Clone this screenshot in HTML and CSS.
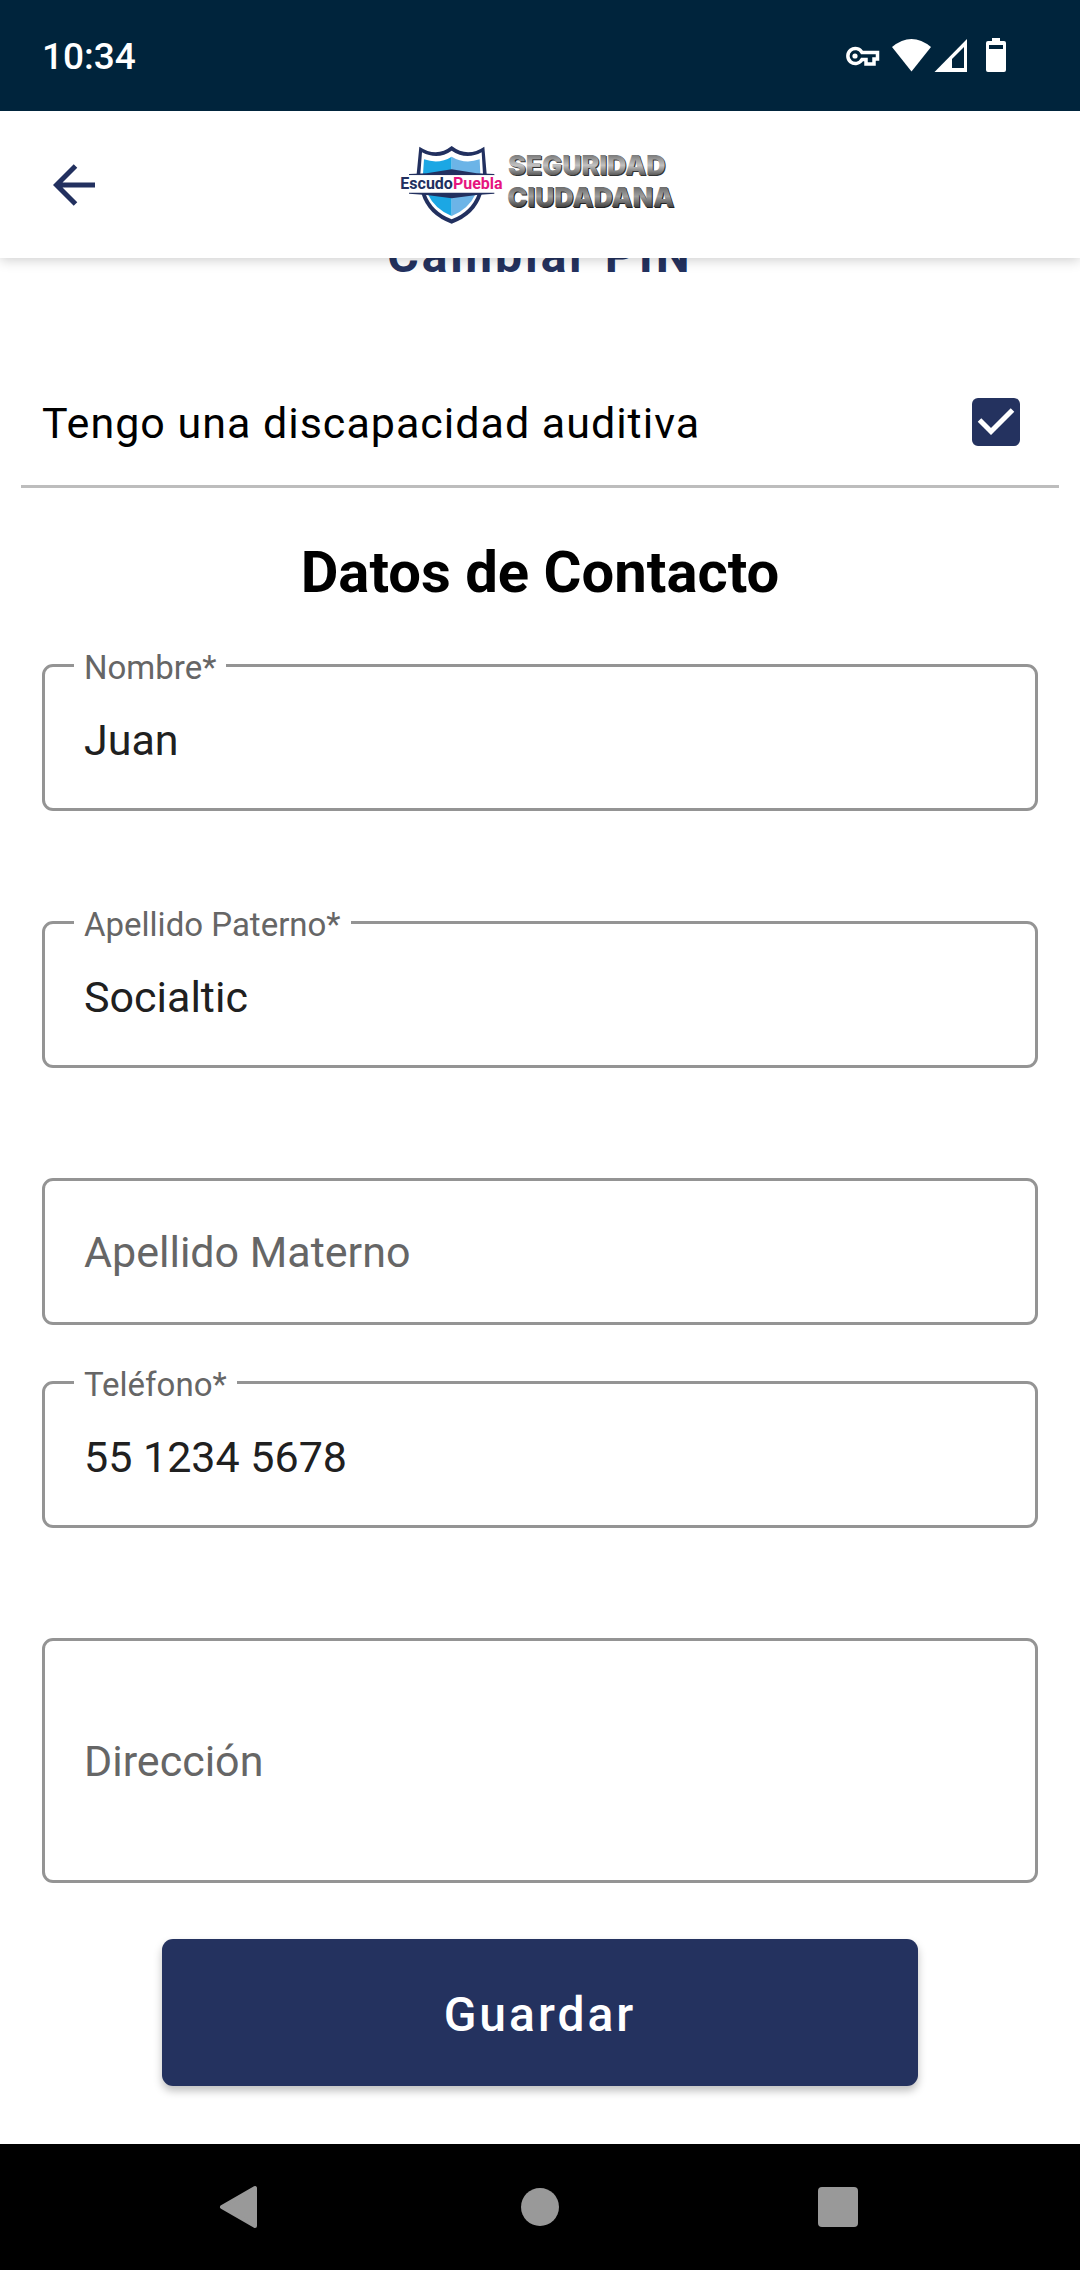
FILE: index.html
```html
<!DOCTYPE html>
<html lang="es">
<head>
  <meta charset="utf-8">
  <meta name="viewport" content="width=device-width, initial-scale=1">
  <title>Datos de Contacto</title>
  <link rel="stylesheet" href="styles.css">
</head>
<body>
  <div class="status-bar">
    <span class="clock">10:34</span>
    <svg class="status-icons" width="160" height="36" viewBox="0 0 160 36" fill="#fff" aria-hidden="true">
      <g fill="none" stroke="#fff" stroke-width="3.500">
        <path d="M16 14.500H31.500V21H28V26H20V21.500H16A7.500 7.500 0 1 1 16 14.500Z"/>
      </g>
      <circle cx="9" cy="18" r="2.600"/>
      <path d="M46 9Q65.500-7 85 9L65.500 33.500Z"/>
      <path d="M121 1V34H88.500Z"/>
      <path d="M118 9V30H106V21Z" fill="#00243c"/>
      <path d="M146 0H154V3H158Q160 3 160 5V32Q160 34 158 34H142Q140 34 140 32V5Q140 3 142 3H146Z"/>
      <path d="M143 7H157V11H143Z" fill="#00243c"/>
    </svg>
  </div>

  <header class="app-bar">
    <button class="back" type="button" aria-label="Volver">
      <svg width="42" height="42" viewBox="0 0 42 42" fill="none" stroke="#22305f" stroke-width="5" aria-hidden="true">
        <path d="M42 21H4M22.500 2L3.500 21L22.500 40"/>
      </svg>
    </button>
    <svg class="brand" width="280" height="80" viewBox="60 45 840 240" role="img" aria-label="Escudo Puebla, Seguridad Ciudadana">
      <defs>
        <linearGradient id="steel" x1="0" y1="0" x2="0" y2="1">
          <stop offset="0.150" stop-color="#747474"/>
          <stop offset="0.500" stop-color="#c2c2c2"/>
          <stop offset="0.800" stop-color="#5c5c5c"/>
        </linearGradient>
        <linearGradient id="steel-dark" x1="0" y1="0" x2="0" y2="1">
          <stop offset="0.150" stop-color="#666"/>
          <stop offset="0.480" stop-color="#a0a0a0"/>
          <stop offset="0.800" stop-color="#484848"/>
        </linearGradient>
      </defs>
      <path fill="#22305f" d="M118 50Q170 84 215 48Q262 84 313 50L320 132H110Z"/>
      <path fill="#fff" d="M126 67Q174 92 215 62Q258 92 305 67L309 132H121Z"/>
      <path fill="#1ba7e4" d="M132 88Q178 104 215 80V132H129Z"/>
      <path fill="#6cb4e7" d="M215 80Q254 104 299 88L301 132H215Z"/>
      <path fill="#22305f" d="M124 190H306Q286 256 215 281Q144 256 124 190Z"/>
      <path fill="#fff" d="M136 190H294Q274 246 215 268Q156 246 136 190Z"/>
      <path fill="#1ba7e4" d="M142 190H215V258Q164 238 142 190Z"/>
      <path fill="#6cb4e7" d="M215 190H288Q266 238 215 258Z"/>
      <path fill="#22305f" d="M87 136V132L140 130L215 118L290 130L343 132V136Z"/>
      <path fill="#fff" d="M87 136H343V188H87Z"/>
      <path fill="#22305f" d="M87 188H343V191L290 195L215 205L140 195L87 191Z"/>
      <text class="brand-name" x="61" y="178"><tspan fill="#22305f">Escudo</tspan><tspan fill="#e6157f">Puebla</tspan></text>
      <g class="brand-tag">
        <text fill="#333" x="387" y="138">SEGURIDAD</text>
        <text fill="url(#steel)" x="384" y="136">SEGURIDAD</text>
        <text fill="#222" x="385" y="233">CIUDADANA</text>
        <text fill="url(#steel-dark)" x="382" y="231">CIUDADANA</text>
      </g>
    </svg>
  </header>

  <main class="content">
    <button class="text-button" type="button">Cambiar PIN</button>

    <div class="check-row">
      <label for="discapacidad">Tengo una discapacidad auditiva</label>
      <span class="check-box">
        <input id="discapacidad" type="checkbox" checked>
        <svg width="48" height="48" viewBox="0 0 48 48" fill="none" stroke="#fff" stroke-width="5" aria-hidden="true">
          <path d="M7.500 22L19 33.500L40.500 12"/>
        </svg>
      </span>
    </div>

    <form class="form">
      <h1>Datos de Contacto</h1>
      <div class="field">
        <label for="nombre">Nombre*</label>
        <input id="nombre" type="text" value="Juan">
      </div>
      <div class="field">
        <label for="paterno">Apellido Paterno*</label>
        <input id="paterno" type="text" value="Socialtic">
      </div>
      <div class="field compact">
        <input type="text" placeholder="Apellido Materno" aria-label="Apellido Materno">
      </div>
      <div class="field">
        <label for="telefono">Teléfono*</label>
        <input id="telefono" type="tel" value="55 1234 5678">
      </div>
      <div class="field compact">
        <textarea rows="1" placeholder="Dirección" aria-label="Dirección"></textarea>
      </div>
      <button class="save" type="submit">Guardar</button>
    </form>
  </main>

  <nav class="nav-bar" aria-label="Sistema">
    <button type="button" aria-label="Atrás">
      <svg width="44" height="44" viewBox="0 0 44 44" aria-hidden="true"><path fill="#999" stroke="#999" stroke-width="4" stroke-linejoin="round" d="M37 3V41L4 22Z"/></svg>
    </button>
    <button type="button" aria-label="Inicio">
      <svg width="44" height="44" viewBox="0 0 44 44" aria-hidden="true"><circle fill="#999" cx="22" cy="22" r="19"/></svg>
    </button>
    <button type="button" aria-label="Recientes">
      <svg width="44" height="44" viewBox="0 0 44 44" aria-hidden="true"><rect fill="#999" x="0" y="2" width="40" height="40" rx="4"/></svg>
    </button>
  </nav>
</body>
</html>
```
FILE: styles.css
```css
:root {
  --navy: #24325f;
  --outline: #949494;
  --hint: #666;
}

* {
  box-sizing: border-box;
}

body {
  display: flex;
  flex-direction: column;
  min-height: 100vh;
  margin: 0;
  background: #fff;
  color: #000;
  font-family: Roboto, "Liberation Sans", sans-serif;
  font-size: 43px;
}

button {
  padding: 0;
  border: 0;
  background: none;
  font-family: inherit;
}

svg {
  display: block;
}

.status-bar {
  position: relative;
  z-index: 2;
  display: flex;
  align-items: center;
  justify-content: space-between;
  height: 111px;
  padding: 0 74px 0 42px;
  background: #00243c;
  color: #fff;
}

.clock {
  padding-top: 2px;
  font-size: 37px;
  font-weight: 500;
}

.app-bar {
  position: relative;
  z-index: 1;
  display: grid;
  grid-template-columns: 1fr auto 1fr;
  align-items: center;
  height: 147px;
  padding: 0 53px;
  background: #fff;
  box-shadow: 0 2px 12px rgba(0, 0, 0, 0.2);
}

.back {
  justify-self: start;
}

.brand-name {
  font: 700 48px Roboto, "Liberation Sans", sans-serif;
}

.brand-tag {
  font: 900 80px Inter, "Liberation Sans", sans-serif;
}

.content {
  flex: 1;
  display: flex;
  flex-direction: column;
}

/* Scrolled partly under the app bar */
.text-button {
  align-self: center;
  height: 147px;
  margin: -76px 0 30px;
  color: var(--navy);
  font-size: 48px;
  font-weight: 700;
  letter-spacing: 3px;
}

.check-row {
  display: flex;
  align-items: center;
  justify-content: space-between;
  height: 129px;
  margin: 0 21px;
  padding: 0 39px 0 21px;
  border-bottom: 3px solid #bdbdbd;
}

.check-row label {
  padding-top: 2px;
  letter-spacing: 1px;
}

.check-box {
  display: grid;
}

.check-box > * {
  grid-area: 1 / 1;
}

.check-box input {
  appearance: none;
  width: 48px;
  height: 48px;
  margin: 0;
  border-radius: 6px;
  background: var(--navy);
}

.check-box svg {
  pointer-events: none;
  visibility: hidden;
}

.check-box input:checked + svg {
  visibility: visible;
}

.form {
  display: flex;
  flex-direction: column;
  padding: 44px 42px 57px;
}

h1 {
  margin: 0 0 52px;
  font-size: 58px;
  font-weight: 700;
  line-height: 80px;
  text-align: center;
}

.field {
  position: relative;
  margin-bottom: 110px;
}

.field.compact {
  margin-bottom: 56px;
}

.field label {
  position: absolute;
  top: -16px;
  left: 32px;
  padding: 0 10px;
  background: #fff;
  color: var(--hint);
  font-size: 33px;
  line-height: 40px;
}

.field input,
.field textarea {
  display: block;
  width: 100%;
  height: 147px;
  padding: 0 39px;
  border: 3px solid var(--outline);
  border-radius: 11px;
  outline: 0;
  background: none;
  color: #202020;
  font: inherit;
  line-height: 50px;
}

.field label + input {
  padding-top: 4px;
}

.field textarea {
  height: 245px;
  padding: 95px 39px;
  overflow: hidden;
  resize: none;
}

.field ::placeholder {
  color: var(--hint);
  opacity: 1;
}

.save {
  align-self: center;
  width: 76%;
  height: 147px;
  padding-top: 4px;
  border-radius: 11px;
  background: var(--navy);
  box-shadow: 0 5px 8px rgba(0, 0, 0, 0.25);
  color: #fff;
  font-size: 48px;
  font-weight: 500;
  letter-spacing: 3px;
}

.nav-bar {
  display: grid;
  grid-template-columns: repeat(3, 1fr);
  place-items: center;
  height: 126px;
  padding: 0 90px;
  background: #000;
}
```
